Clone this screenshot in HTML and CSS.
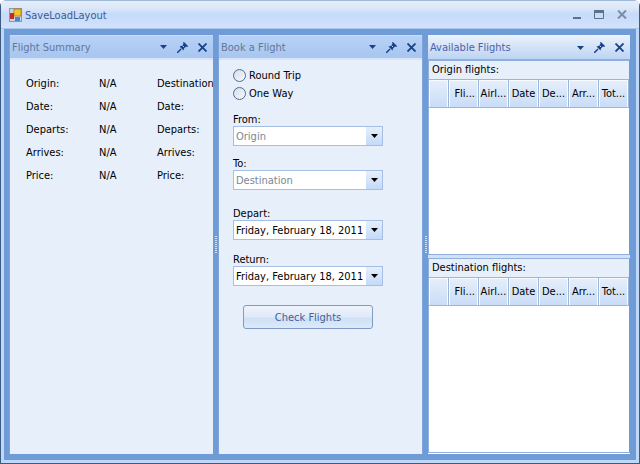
FILE: index.html
```html
<!DOCTYPE html>
<html lang="en">
<head>
    <meta charset="UTF-8">
    <title>SaveLoadLayout</title>
    <link rel="stylesheet" href="styles.css">
</head>
<body>
<svg class="defs" width="0" height="0">
    <symbol id="caret" viewBox="0 0 11 6"><path d="M0 0h11L5.500 6z" fill="#15428b"/></symbol>
    <symbol id="pin" viewBox="0 0 11 11"><path d="M0 11l4-4" stroke="#15428b" stroke-width="1.500"/><path d="M2.500 4.500l2-.5L6.500 2 6 .5 7 0l4 4-.5 1-1.500-.5-2 2-.5 2z" fill="#15428b"/><path d="M5.500 3.500l1.500 1.500" stroke="#bcd3f3"/></symbol>
    <symbol id="close" viewBox="0 0 9 9"><path d="M.5.500l8 8M8.500.500l-8 8" stroke="#15428b" stroke-width="1.800"/></symbol>
    <symbol id="arrow" viewBox="0 0 7 4"><path d="M0 0h7L3.500 4z" fill="#000"/></symbol>
</svg>
<div class="window">
    <div class="titlebar">
        <svg class="app-icon" width="13" height="14" viewBox="0 0 13 14">
            <rect x=".5" y=".5" width="12" height="13" fill="#c9d3e0" stroke="#8d98a8"/>
            <rect x="5" y="1" width="7" height="7" fill="#f5c32c" stroke="#b07a10" stroke-width=".8"/>
            <rect x="1" y="5" width="4" height="6" fill="#c8281e"/>
            <rect x="6" y="9" width="5" height="4" fill="#4a86d8"/>
        </svg>
        <span class="title">SaveLoadLayout</span>
        <div class="win-buttons">
            <svg class="win-min" width="8" height="3" viewBox="0 0 8 3"><rect width="8" height="2" y="1" fill="#5d7288"/></svg>
            <svg width="10" height="9" viewBox="0 0 10 9"><path d="M.5.500h9v8h-9z" fill="none" stroke="#5d7288"/><rect width="10" height="3" fill="#5d7288"/></svg>
            <svg width="10" height="9" viewBox="0 0 10 9"><path d="M1 .500l8 8M9 .500l-8 8" stroke="#7d8da0" stroke-width="2"/></svg>
        </div>
    </div>
    <div class="client">
        <section class="panel panel-summary">
            <header class="caption">
                <span class="caption-text">Flight Summary</span>
                <svg class="ci-caret"><use href="#caret"/></svg>
                <svg class="ci-pin"><use href="#pin"/></svg>
                <svg class="ci-close"><use href="#close"/></svg>
            </header>
            <div class="summary">
                <span>Origin:</span><span>N/A</span><span>Destination:</span>
                <span>Date:</span><span>N/A</span><span>Date:</span>
                <span>Departs:</span><span>N/A</span><span>Departs:</span>
                <span>Arrives:</span><span>N/A</span><span>Arrives:</span>
                <span>Price:</span><span>N/A</span><span>Price:</span>
            </div>
        </section>
        <div class="splitter"><i class="grip"></i></div>
        <section class="panel panel-book">
            <header class="caption">
                <span class="caption-text">Book a Flight</span>
                <svg class="ci-caret"><use href="#caret"/></svg>
                <svg class="ci-pin"><use href="#pin"/></svg>
                <svg class="ci-close"><use href="#close"/></svg>
            </header>
            <div class="book">
                <label class="radio"><i class="radio-dot"></i>Round Trip</label>
                <label class="radio"><i class="radio-dot"></i>One Way</label>
                <div class="field field-from">
                    <span class="field-label">From:</span>
                    <div class="combo combo-empty"><span class="combo-text">Origin</span><span class="combo-btn"><svg width="7" height="4"><use href="#arrow"/></svg></span></div>
                </div>
                <div class="field field-to">
                    <span class="field-label">To:</span>
                    <div class="combo combo-empty"><span class="combo-text">Destination</span><span class="combo-btn"><svg width="7" height="4"><use href="#arrow"/></svg></span></div>
                </div>
                <div class="field field-depart">
                    <span class="field-label">Depart:</span>
                    <div class="combo"><span class="combo-text">Friday, February 18, 2011</span><span class="combo-btn"><svg width="7" height="4"><use href="#arrow"/></svg></span></div>
                </div>
                <div class="field field-return">
                    <span class="field-label">Return:</span>
                    <div class="combo"><span class="combo-text">Friday, February 18, 2011</span><span class="combo-btn"><svg width="7" height="4"><use href="#arrow"/></svg></span></div>
                </div>
                <button class="check-btn">Check Flights</button>
            </div>
        </section>
        <div class="splitter"><i class="grip"></i></div>
        <section class="panel panel-flights">
            <header class="caption caption-active">
                <span class="caption-text">Available Flights</span>
                <svg class="ci-caret"><use href="#caret"/></svg>
                <svg class="ci-pin"><use href="#pin"/></svg>
                <svg class="ci-close"><use href="#close"/></svg>
            </header>
            <div class="grid-box grid-origin">
                <div class="grid-title">Origin flights:</div>
                <div class="grid-head">
                    <span></span><span class="right">Fli...</span><span>Airl...</span><span>Date</span><span>De...</span><span>Arr...</span><span>Tot...</span>
                </div>
                <div class="grid-body"></div>
            </div>
            <div class="grid-box grid-dest">
                <div class="grid-title">Destination flights:</div>
                <div class="grid-head">
                    <span></span><span class="right">Fli...</span><span>Airl...</span><span>Date</span><span>De...</span><span>Arr...</span><span>Tot...</span>
                </div>
                <div class="grid-body"></div>
            </div>
        </section>
    </div>
</div>
</body>
</html>
```

FILE: styles.css
```css
* {
    box-sizing: border-box;
}
html, body {
    margin: 0;
    padding: 0;
}
body {
    width: 640px;
    height: 464px;
    overflow: hidden;
    font-family: "DejaVu Sans Condensed", "DejaVu Sans", sans-serif;
    font-size: 11px;
    color: #000;
}
.defs {
    position: absolute;
}
.window {
    width: 640px;
    height: 464px;
    display: flex;
    flex-direction: column;
    border: 1px solid #3d5a80;
    border-top-color: #9db8d8;
    border-radius: 6px 6px 0 0;
    background: #bfd8f7;
}
.titlebar {
    height: 28px;
    flex: none;
    display: flex;
    align-items: center;
    padding: 0 12px 0 8px;
    background: linear-gradient(#e6eef9 0, #dce8f8 25%, #c6dafa 50%, #d2e2fb 100%);
    border-bottom: 1px solid #a9c6ee;
}
.app-icon {
    flex: none;
}
.title {
    margin-left: 3px;
    padding-top: 2px;
    color: #3e5c8e;
    font-size: 11px;
}
.win-buttons {
    margin-left: auto;
    display: flex;
    align-items: center;
    gap: 13px;
}
.win-min {
    margin-top: 6px;
}
.client {
    flex: 1;
    margin: 0 3px 3px;
    padding: 5px 6px 6px 5px;
    display: flex;
    background: #6f9bd6;
    border-top: 1px solid #6f9bd6;
}
.panel {
    display: flex;
    flex-direction: column;
    background: #e7effa;
}
.panel-summary {
    width: 204px;
    border-left: 1px solid #7da5da;
}
.panel-book {
    width: 205px;
    border-left: 1px solid #7da5da;
    border-right: 1px solid #7da5da;
}
.panel-flights {
    width: 202px;
    background: #d3e1f5;
    border-bottom: 1px solid #fff;
}
.splitter {
    width: 5px;
    flex: none;
    display: flex;
    align-items: center;
    justify-content: center;
}
.grip {
    width: 2px;
    height: 18px;
    background: repeating-linear-gradient(#cfe0f6 0 1px, #6f9bd6 1px 2px);
}
.caption {
    height: 25px;
    flex: none;
    display: flex;
    align-items: center;
    padding-left: 2px;
    background: linear-gradient(#b8d2f6, #a7c5f0);
    border-top: 1px solid #c7dcf8;
    border-bottom: 2px solid #d5e4f8;
}
.caption-active {
    background: linear-gradient(#e9f1fb, #bdd4f4);
    border-top-color: #eef4fc;
    border-bottom: 1px solid #8fb0de;
}
.caption-text {
    flex: 1;
    color: #62769c;
    font-size: 11px;
    white-space: nowrap;
}
.caption-active .caption-text {
    color: #4c62a8;
}
.ci-caret {
    width: 7px;
    height: 4px;
    margin-right: 10px;
}
.ci-pin {
    width: 11px;
    height: 11px;
    margin-right: 10px;
}
.ci-close {
    width: 9px;
    height: 9px;
    margin-right: 6px;
}
.summary {
    padding: 17px 0 0 16px;
    display: grid;
    grid-template-columns: 73px 58px 70px;
    grid-auto-rows: 23px;
    overflow: hidden;
    white-space: nowrap;
    line-height: 14px;
}
.book {
    display: flex;
    flex-direction: column;
    padding: 6px 0 0 14px;
}
.radio {
    height: 18px;
    display: flex;
    align-items: center;
    gap: 3px;
}
.radio-dot {
    width: 13px;
    height: 13px;
    border: 1px solid #4d6d94;
    border-radius: 50%;
    background: linear-gradient(135deg, #d4dde8, #f7f9fc);
}
.field {
    display: flex;
    flex-direction: column;
}
.field-from {
    margin-top: 11px;
}
.field-to {
    margin-top: 11px;
}
.field-depart {
    margin-top: 17px;
}
.field-return {
    margin-top: 13px;
}
.field-label {
    line-height: 13px;
}
.combo {
    width: 150px;
    height: 20px;
    display: flex;
    align-items: center;
    justify-content: space-between;
    background: #fff;
    border: 1px solid #a3bfe6;
}
.combo-text {
    padding-left: 2px;
    white-space: nowrap;
}
.combo-empty .combo-text {
    color: #7b8794;
}
.combo-btn {
    width: 16px;
    height: 18px;
    display: flex;
    align-items: center;
    justify-content: center;
    background: linear-gradient(#e6effb, #c4daf8);
}
.check-btn {
    width: 130px;
    height: 24px;
    margin: 19px 0 0 10px;
    padding: 0;
    font: inherit;
    color: #3f5f9c;
    border: 1px solid #7f9cc4;
    border-radius: 3px;
    background: linear-gradient(#eef4fc 0, #dfe9f8 50%, #cfe0f6 55%, #dce9fa 100%);
}
.grid-box {
    display: flex;
    flex-direction: column;
    background: #fff;
    border: 1px solid #8fb0de;
    border-right-color: #6f9bd6;
}
.grid-origin {
    height: 195px;
}
.grid-dest {
    flex: 1;
    margin-top: 3px;
}
.grid-title {
    height: 18px;
    flex: none;
    padding-left: 3px;
    line-height: 18px;
    background: #e7effa;
}
.grid-head {
    height: 29px;
    flex: none;
    display: grid;
    grid-template-columns: 20px repeat(6, 30px);
    background: #e7effa;
    border-top: 1px solid #9cb6d9;
    border-bottom: 1px solid #9cb6d9;
}
.grid-head span {
    display: flex;
    align-items: center;
    justify-content: center;
    white-space: nowrap;
    background: linear-gradient(#e6effb, #c9dcf7);
    border-right: 1px solid #9cb6d9;
    box-shadow: inset 1px 1px 0 #f7fafe, inset -1px 0 0 #f7fafe;
}
.grid-head .right {
    justify-content: flex-end;
    padding-right: 3px;
}
.grid-body {
    flex: 1;
    background: #fff;
}
```
